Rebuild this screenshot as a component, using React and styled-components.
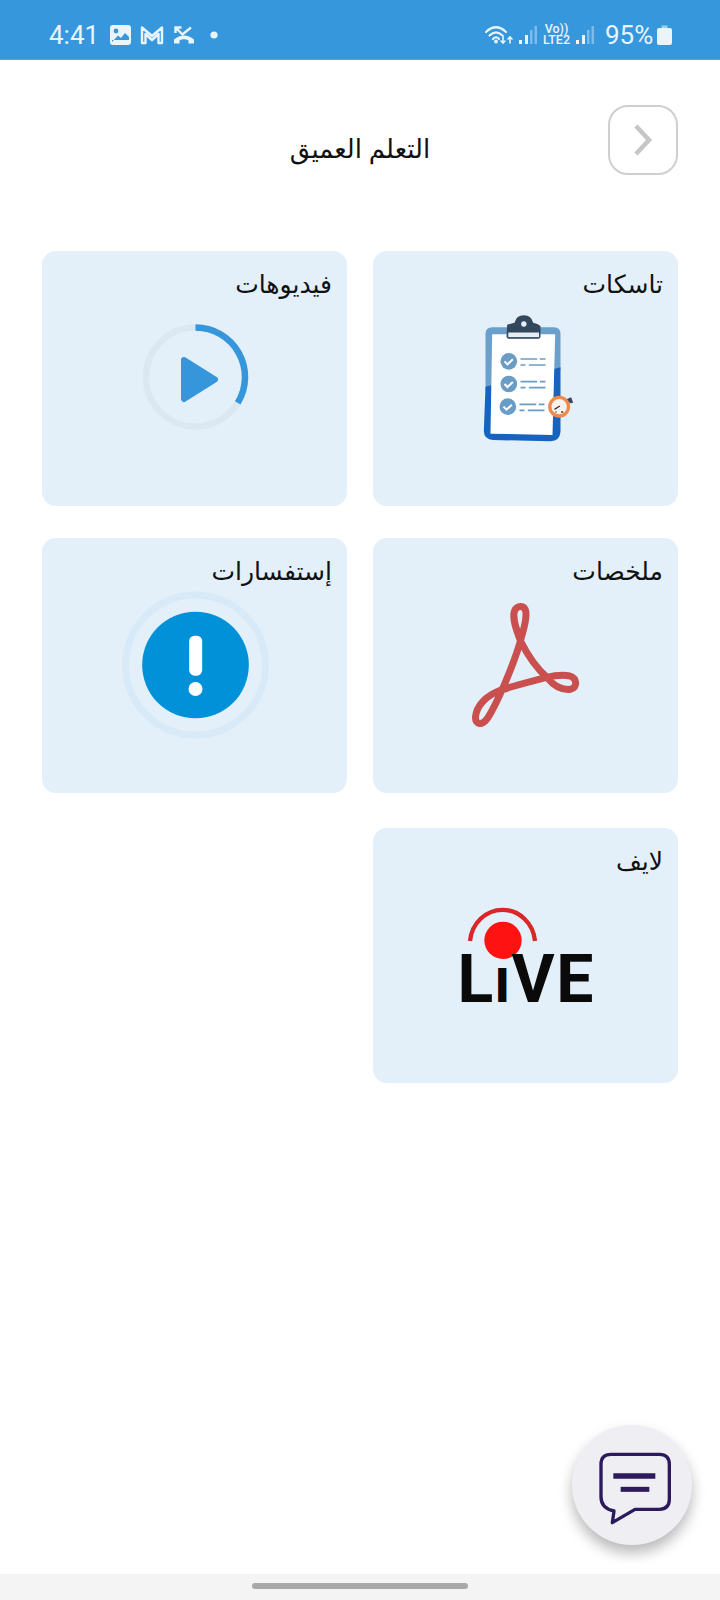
import React from "react";
import styled, { createGlobalStyle } from "styled-components";

const Global = createGlobalStyle`
  html, body { margin: 0; padding: 0; background: #fff; }
  * { box-sizing: border-box; }
`;

const Page = styled.div`
  position: relative;
  width: 720px;
  height: 1600px;
  display: flex;
  flex-direction: column;
  background: #fff;
  overflow: hidden;
  font-family: "Noto Sans", "DejaVu Sans", sans-serif;
`;

const StatusBar = styled.div`
  height: 60px;
  flex: none;
  display: flex;
  align-items: center;
  justify-content: space-between;
  padding: 10px 48px 0 49px;
  background: #3797dc;
  border-bottom: 1px solid #46a6e4;
  color: #e9f4fb;
  font-family: Roboto, "Liberation Sans", sans-serif;
  font-size: 26px;
`;

const StatusGroup = styled.div`
  display: flex;
  align-items: center;
  gap: ${(p) => p.$gap}px;
`;

const Clock = styled.span`
  width: 50px;
  margin-right: 2px;
  line-height: 28px;
  white-space: nowrap;
`;

const Percent = styled.span`
  width: 46px;
  margin-left: 5px;
  line-height: 28px;
  white-space: nowrap;
`;

const Header = styled.header`
  direction: rtl;
  display: grid;
  grid-template-columns: 1fr auto 1fr;
  padding: 45px 42px 0;
  flex: none;
  height: 114px;
`;

const BackButton = styled.button`
  width: 70px;
  height: 70px;
  padding: 0;
  display: flex;
  align-items: center;
  justify-content: center;
  background: #fff;
  border: 2px solid #cfcfcf;
  border-radius: 20px;
`;

const HeaderTitle = styled.h1`
  margin: 26px 0 0;
  font-size: 26px;
  line-height: 34px;
  font-weight: 400;
  color: #111;
  white-space: nowrap;
`;

const CardGrid = styled.main`
  direction: rtl;
  display: grid;
  grid-template-columns: 305px 305px;
  column-gap: 26px;
  row-gap: 32px;
  padding: 77px 42px 0;
  flex: 1;
  align-content: start;
`;

const Card = styled.a`
  height: 255px;
  display: flex;
  flex-direction: column;
  align-items: center;
  margin-top: ${(p) => p.$offset || 0}px;
  padding-top: 16px;
  background: #e3f0fa;
  border-radius: 14px;
`;

const CardTitle = styled.h2`
  align-self: stretch;
  margin: 0;
  padding: 0 15px;
  font-size: 25px;
  line-height: 32px;
  font-weight: 400;
  color: #111;
`;

const Art = styled.div`
  margin-top: ${(p) => p.$top}px;
  direction: ltr;
  display: flex;
  flex-direction: column;
  align-items: center;
  svg { display: block; }
`;

const LiveWord = styled.div`
  width: 136px;
  margin-top: -1px;
  display: flex;
  justify-content: space-between;
  align-items: baseline;
  font-family: Roboto, "Liberation Sans", Arial, sans-serif;
  font-weight: 700;
  line-height: 50px;
  color: #0a0a0a;
`;

const LiveLetter = styled.span`
  font-size: ${(p) => p.$size || 66}px;
  font-weight: ${(p) => p.$weight || 700};
`;

const NavBar = styled.footer`
  height: 26px;
  flex: none;
  display: flex;
  justify-content: center;
  padding-top: 9px;
  background: #f4f4f4;
`;

const NavPill = styled.div`
  width: 216px;
  height: 6px;
  border-radius: 3px;
  background: #a9a9a9;
`;

const Fab = styled.button`
  position: absolute;
  left: 572px;
  top: 1425px;
  width: 120px;
  height: 120px;
  padding: 0;
  border: none;
  border-radius: 50%;
  background: #efeff3;
  box-shadow: 0 8px 14px rgba(0, 0, 0, 0.28);
  svg { display: block; }
`;

const VoLteIcon = styled.span`
  width: 27px;
  text-align: center;
  white-space: pre-line;
  font-size: 12.5px;
  line-height: 10.5px;
  font-weight: 500;
`;

const PhotoIcon = () => (
  <svg width="21" height="20" viewBox="0 0 21 20">
    <rect x="0" y="0" width="21" height="20" rx="3" fill="#e9f4fb" />
    <circle cx="6" cy="6" r="2.4" fill="#3797dc" />
    <path d="M2 17 L8 10.5 L11 13 L15 8 L19 12 V15 H2Z" fill="#3797dc" />
  </svg>
);

const MailIcon = () => (
  <svg width="24" height="20" viewBox="0 0 24 20" fill="none" stroke="#e9f4fb" strokeWidth="2.4" strokeLinejoin="round">
    <path d="M2 18 V2.5 L12 11 L22 2.5 V18 H18.5 V9 L12 15 L5.5 9 V18 Z" />
  </svg>
);

const MissedCallIcon = () => (
  <svg width="22" height="20" viewBox="0 0 22 20" fill="none">
    <path d="M2.5 8 V2.5 H8.5 M2.5 2.5 L9.5 9.5 L18 2.5" stroke="#e9f4fb" strokeWidth="2.4" />
    <path d="M1 18.5 V14.5 Q11 6.5 21 14.5 V18.5 H15.5 V15.5 Q11 13 6.5 15.5 V18.5 Z" fill="#e9f4fb" />
  </svg>
);

const Dot = () => (
  <svg width="8" height="8" viewBox="0 0 8 8" style={{ marginLeft: 6 }}>
    <circle cx="4" cy="4" r="3.6" fill="#e9f4fb" />
  </svg>
);

const WifiIcon = () => (
  <svg width="28" height="20" viewBox="0 0 28 20" fill="none" stroke="#e9f4fb" strokeWidth="2.2" strokeLinecap="round">
    <path d="M1 7 Q11 -2.5 21 7" />
    <path d="M4.5 10.5 Q11 4 17.5 10.5" />
    <path d="M8 14 Q11 10.5 14 14" />
    <circle cx="11" cy="16.5" r="0.8" />
    <path d="M18 11 V18 M16 16 L18 18 L20 16 M25 18 V12 M23 14 L25 12 L27 14" strokeWidth="1.6" />
  </svg>
);

const SignalIcon = () => (
  <svg width="18" height="20" viewBox="0 0 18 20">
    <rect x="0" y="15" width="3" height="4" fill="#f2f8fd" />
    <rect x="6" y="10" width="3" height="9" fill="#e9f4fb" />
    <rect x="11" y="5" width="2.5" height="14" fill="#7dbce9" />
    <rect x="15.5" y="1" width="2.5" height="18" fill="#7dbce9" />
  </svg>
);

const BatteryIcon = () => (
  <svg width="15" height="20" viewBox="0 0 15 20">
    <path d="M4.5 0.5 H10.5 V3 H4.5Z" fill="#9fcdee" />
    <rect x="0" y="3" width="15" height="17" rx="2" fill="#e9f4fb" />
  </svg>
);

const ChevronIcon = () => (
  <svg width="22" height="32" viewBox="0 0 22 32" fill="none" stroke="#c6c6c6" strokeWidth="4.5">
    <path d="M4 2 L17 16 L4 30" />
  </svg>
);

const ClipboardArt = () => (
  <svg width="120" height="135" viewBox="76.5 60 360 405">
    <path d="M155 112 H340 Q360 112 360 132 V240 L135 300 V132 Q135 112 155 112Z" fill="#6b9fcc" />
    <path d="M135 290 L360 232 V425 Q358 452 330 454 L158 450 Q130 448 130 422Z" fill="#1464c0" />
    <path d="M155 133 H344 L336 435 L150 431Z" fill="#fff" />
    <path d="M200 104 Q214 100 222 98 Q228 76 250 76 Q272 76 278 98 Q292 100 300 108 V140 Q300 146 292 146 H206 Q198 146 198 140Z" fill="#33475f" />
    <path d="M202 126 H297 V143 H202Z" fill="#e6edf3" stroke="#33475f" strokeWidth="3" />
    <circle cx="250" cy="102" r="8" fill="#e3f0fa" />
    {[214, 282, 350].map((y, i) => (
      <g key={y}>
        <circle cx={205 - (i === 2 ? 3 : 0)} cy={y} r="25" fill="#6a9dc6" />
        <path d={`M${192 - (i === 2 ? 3 : 0)} ${y} l9 9 l16 -15`} fill="none" stroke="#fff" strokeWidth="6" />
        <path d={`M240 ${y - 7} H290 M298 ${y - 7} H315 M240 ${y + 11} H255 M265 ${y + 11} H315`} stroke="#6a9dc6" strokeWidth="5" transform={`translate(${i === 2 ? -3 : 0} 0)`} />
      </g>
    ))}
    <path d="M378 328 L392 322 L398 338 L388 340Z" fill="#33475f" />
    <circle cx="356" cy="350" r="28" fill="#f6f3ee" stroke="#ee8a4c" strokeWidth="10" />
    <path d="M342 358 L358 348 M345 366 h3 M362 366 h6" stroke="#44342c" strokeWidth="4" />
  </svg>
);

const PlayArt = () => (
  <svg width="120" height="120" viewBox="0 0 120 120" fill="none">
    <circle cx="60.5" cy="60" r="49.5" stroke="#dbe8f1" strokeWidth="6.5" />
    <path d="M60.5 10.5 A49.5 49.5 0 0 1 102.7 85.9" stroke="#3596dc" strokeWidth="6.5" />
    <path d="M49 43 L80 62.5 L49 82Z" fill="#3596dc" stroke="#3596dc" strokeWidth="6" strokeLinejoin="round" />
  </svg>
);

const PdfArt = () => (
  <svg width="120" height="130" viewBox="46.5 30 360 390" fill="none">
    <path
      d="M150 298 C105 315 78 345 75 378 C74 402 95 405 112 380 C135 345 185 235 210 150 C195 110 185 80 192 60 C200 42 222 42 226 62 C230 90 215 125 210 150 C230 190 262 235 290 260 C310 285 335 298 360 295 C382 290 380 262 358 255 C335 250 310 254 285 260 C240 272 195 282 150 298Z"
      stroke="#c9504f"
      strokeWidth="21"
      strokeLinejoin="round"
    />
  </svg>
);

const AlertArt = () => (
  <svg width="150" height="150" viewBox="28.5 28 450 450">
    <circle cx="255" cy="253" r="210" fill="none" stroke="#d8eaf7" strokeWidth="21" />
    <circle cx="255" cy="253" r="160" fill="#0091d9" />
    <rect x="236" y="165" width="39" height="120" rx="16" fill="#fff" />
    <circle cx="255" cy="325" r="21" fill="#fff" />
  </svg>
);

const LiveArt = () => (
  <svg width="136" height="50" viewBox="52 45 408 150" style={{ overflow: "visible" }}>
    <path d="M88 150 A98 104 0 0 1 283 150" fill="none" stroke="#d92626" strokeWidth="13" />
    <circle cx="187" cy="148" r="56" fill="#fe1212" />
  </svg>
);

const ChatIcon = () => (
  <svg width="120" height="120" viewBox="66 45 360 360" fill="none" stroke="#2c1a5c">
    <path
      d="M183 133 H328 Q358 133 358 163 V268 Q358 298 328 298 H255 L187 338 L192 303 Q153 295 153 260 V163 Q153 133 183 133Z"
      strokeWidth="10"
      strokeLinejoin="round"
    />
    <path d="M190 198 H316" strokeWidth="17" />
    <path d="M212 238 H298" strokeWidth="15" />
  </svg>
);

export default function App() {
  return (
    <Page>
      <Global />
      <StatusBar>
        <StatusGroup $gap={9}>
          <Clock>4:41</Clock>
          <PhotoIcon />
          <MailIcon />
          <MissedCallIcon />
          <Dot />
        </StatusGroup>
        <StatusGroup $gap={6}>
          <WifiIcon />
          <SignalIcon />
          <VoLteIcon>{"Vo))\nLTE2"}</VoLteIcon>
          <SignalIcon />
          <Percent>95%</Percent>
          <BatteryIcon />
        </StatusGroup>
      </StatusBar>

      <Header>
        <BackButton aria-label="رجوع">
          <ChevronIcon />
        </BackButton>
        <HeaderTitle>التعلم العميق</HeaderTitle>
      </Header>

      <CardGrid>
        <Card>
          <CardTitle>تاسكات</CardTitle>
          <Art $top={11}>
            <ClipboardArt />
          </Art>
        </Card>
        <Card>
          <CardTitle>فيديوهات</CardTitle>
          <Art $top={18}>
            <PlayArt />
          </Art>
        </Card>
        <Card>
          <CardTitle>ملخصات</CardTitle>
          <Art $top={15}>
            <PdfArt />
          </Art>
        </Card>
        <Card>
          <CardTitle>إستفسارات</CardTitle>
          <Art $top={4}>
            <AlertArt />
          </Art>
        </Card>
        <Card $offset={3}>
          <CardTitle>لايف</CardTitle>
          <Art $top={30}>
            <LiveArt />
            <LiveWord>
              <LiveLetter>L</LiveLetter>
              <LiveLetter $size={48} $weight={900}>I</LiveLetter>
              <LiveLetter>V</LiveLetter>
              <LiveLetter>E</LiveLetter>
            </LiveWord>
          </Art>
        </Card>
      </CardGrid>

      <NavBar>
        <NavPill />
      </NavBar>

      <Fab aria-label="المحادثة">
        <ChatIcon />
      </Fab>
    </Page>
  );
}
